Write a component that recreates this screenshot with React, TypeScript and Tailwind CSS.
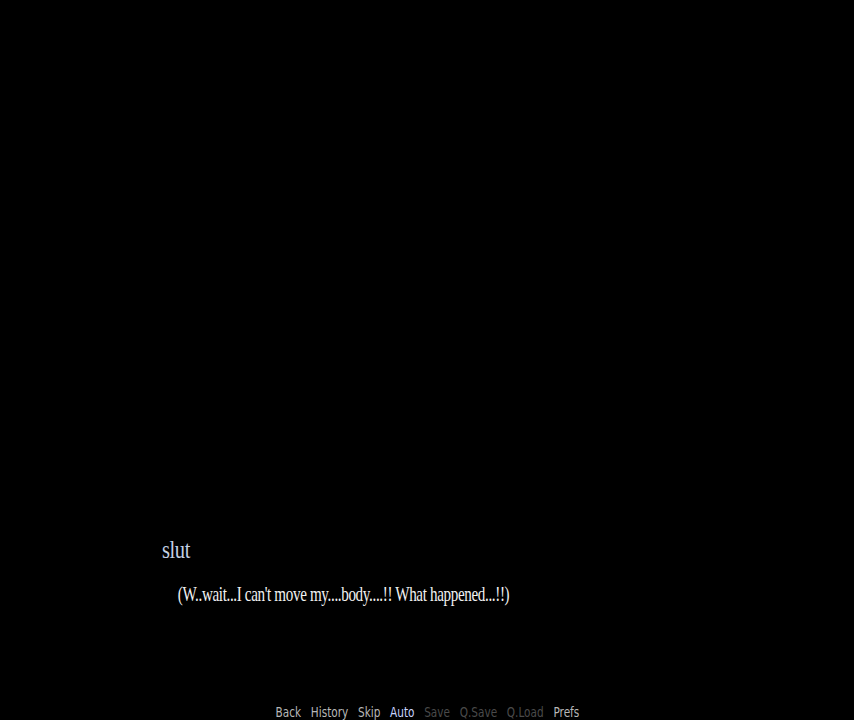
import React from 'react';

const menu = [
  { label: 'Back', state: 'idle' },
  { label: 'History', state: 'idle' },
  { label: 'Skip', state: 'idle' },
  { label: 'Auto', state: 'active' },
  { label: 'Save', state: 'off' },
  { label: 'Q.Save', state: 'off' },
  { label: 'Q.Load', state: 'off' },
  { label: 'Prefs', state: 'idle' },
];

const App: React.FC = () => {
  return (
    <div className="w-full h-[720px] bg-black overflow-hidden flex flex-col">
      <div className="flex-1" />

      <div className="pl-[162px] h-[161px]">
        <div className="font-['Liberation_Serif',serif] text-[25px] leading-[30px] text-[#c4d0e4] tracking-[-0.5px] origin-left scale-x-[0.82]">
          slut
        </div>
        <div className="mt-[15px] pl-[22px] font-['Liberation_Serif',serif] text-[21px] leading-[28px] text-[#f2f2f2] tracking-[-0.5px] origin-left scale-x-[0.72] whitespace-nowrap">
          (W..wait...I can't move my....body....!! What happened...!!)
        </div>
      </div>

      <div className="h-[24px] flex justify-center">
        <div className="flex items-start gap-[13px] font-['DejaVu_Sans',sans-serif] text-[14px] leading-[16px] pt-[8px] scale-x-[0.75]">
          {menu.map((m) => (
            <span
              key={m.label}
              className={
                m.state === 'active'
                  ? 'text-[#c8d4ff]'
                  : m.state === 'off'
                  ? 'text-[#4a4a4a]'
                  : 'text-[#b8b8b8]'
              }
            >
              {m.label}
            </span>
          ))}
        </div>
      </div>
    </div>
  );
};

export default App;
